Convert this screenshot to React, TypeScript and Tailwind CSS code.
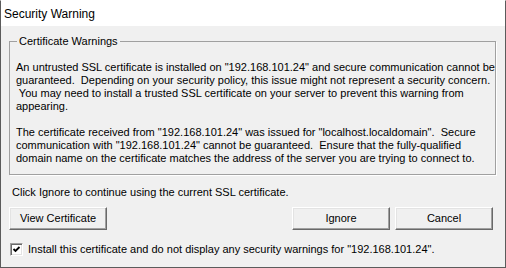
import React from "react";

const font = { fontFamily: '"Liberation Sans", Arial, sans-serif' };

function Btn({ label, w }: { label: string; w: string }) {
  return (
    <button
      className={`${w} h-[23px] bg-[#f0f0f0] text-[11px] leading-[13px] text-black border border-t-white border-l-white border-b-[#696969] border-r-[#696969] shadow-[inset_-1px_-1px_0_#a0a0a0,inset_1px_1px_0_#e3e3e3] flex items-center justify-center`}
    >
      {label}
    </button>
  );
}

export default function App() {
  const p1 = [
    'An untrusted SSL certificate is installed on "192.168.101.24" and secure communication cannot be',
    "guaranteed.  Depending on your security policy, this issue might not represent a security concern.",
    " You may need to install a trusted SSL certificate on your server to prevent this warning from",
    "appearing.",
  ];
  const p2 = [
    'The certificate received from "192.168.101.24" was issued for "localhost.localdomain".  Secure',
    'communication with "192.168.101.24" cannot be guaranteed.  Ensure that the fully-qualified',
    "domain name on the certificate matches the address of the server you are trying to connect to.",
  ];
  return (
    <div
      className="w-[506px] h-[268px] border border-[#5b5b5b] border-t-white bg-[#f0f0f0] flex flex-col text-black"
      style={font}
    >
      <div className="h-[25px] bg-white flex items-center pl-[3px] text-[12px] leading-[14px]">
        Security Warning
      </div>
      <div className="flex flex-col pl-[8px] pr-[9px]">
        <div className="relative mt-[15px] h-[134px] border border-[#a0a0a0] shadow-[1px_1px_0_#ffffff] pl-[6px] pt-[19px] text-[11px] leading-[13px]">
          <div className="absolute -top-[7px] left-[7px] bg-[#f0f0f0] px-[2px] text-[11px] leading-[13px]">
            Certificate Warnings
          </div>
          {p1.map((l, i) => (
            <div key={"a" + i} className="whitespace-pre h-[13px]">
              {l}
            </div>
          ))}
          <div className="h-[13px]" />
          {p2.map((l, i) => (
            <div key={"b" + i} className="whitespace-pre h-[13px]">
              {l}
            </div>
          ))}
        </div>
        <div className="mt-[11px] pl-[3px] text-[11px] leading-[13px]">
          Click Ignore to continue using the current SSL certificate.
        </div>
        <div className="mt-[8px] flex items-center">
          <Btn label="View Certificate" w="w-[98px]" />
          <div className="flex-1" />
          <Btn label="Ignore" w="w-[98px]" />
          <div className="w-[5px]" />
          <Btn label="Cancel" w="w-[98px]" />
          <div className="w-[3px]" />
        </div>
        <div className="mt-[13px] flex items-center">
          <div className="w-[13px] h-[13px] ml-[1px] bg-white border border-t-[#a0a0a0] border-l-[#a0a0a0] border-b-white border-r-white shadow-[inset_1px_1px_0_#696969,inset_-1px_-1px_0_#e3e3e3] flex items-center justify-center">
            <svg width="9" height="9" viewBox="0 0 9 9">
              <path d="M1.5 4 L3.5 6 L7.5 2" stroke="#000" strokeWidth="1.8" fill="none" />
            </svg>
          </div>
          <div className="ml-[5px] text-[11px] leading-[13px]">
            Install this certificate and do not display any security warnings for "192.168.101.24".
          </div>
        </div>
      </div>
    </div>
  );
}
